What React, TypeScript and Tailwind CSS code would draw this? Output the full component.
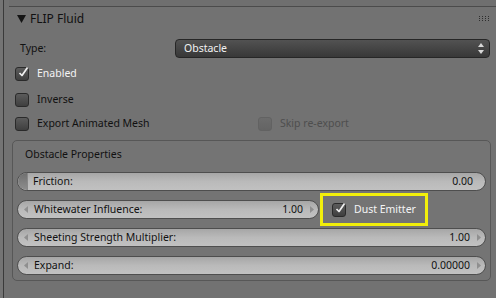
import React from "react";
import clsx from "clsx";

function Check({ on, dim }: { on?: boolean; dim?: boolean }) {
  return (
    <span
      className={clsx(
        "relative block w-[14px] h-[14px] rounded-[3px] border shrink-0",
        dim
          ? "border-[#626262] bg-linear-to-b from-[#6c6c6c] to-[#646464]"
          : "border-[#2a2a2a] bg-linear-to-b from-[#5c5c5c] to-[#3f3f3f]"
      )}
    >
      {on && (
        <svg className="absolute -top-[3px] left-[1px] overflow-visible" width="13" height="14" viewBox="0 0 13 14">
          <path d="M2.5 8 L5 10.5 L10.5 2.5" stroke="#f0f0f0" strokeWidth="1.7" fill="none" strokeLinejoin="round" />
        </svg>
      )}
    </span>
  );
}

function Arrow({ dir }: { dir: "l" | "r" }) {
  return (
    <svg width="4" height="7" viewBox="0 0 4 7" className="shrink-0">
      <path d={dir === "l" ? "M4 0 L0 3.5 L4 7 Z" : "M0 0 L4 3.5 L0 7 Z"} fill="#8f8f8f" />
    </svg>
  );
}

function NumField({
  label,
  value,
  slider,
  className,
}: {
  label: string;
  value: string;
  slider?: boolean;
  className?: string;
}) {
  return (
    <div
      className={clsx(
        "flex items-center h-[19px] rounded-full border border-[#4e4e4e] bg-linear-to-b from-[#a6a6a6] via-[#bababa] to-[#c1c1c1] overflow-hidden text-[#111] leading-[17px]",
        className
      )}
    >
      {slider ? (
        <span className="self-stretch w-[10px] rounded-l-full bg-linear-to-b from-[#6f6f6f] to-[#8e8e8e] border-r border-[#888]" />
      ) : (
        <span className="pl-[6px] flex items-center">
          <Arrow dir="l" />
        </span>
      )}
      <span className={clsx("flex-1 whitespace-nowrap", slider ? "pl-[5px]" : "pl-[6px]")}>{label}</span>
      <span className={slider ? "pr-[12px]" : ""}>{value}</span>
      {!slider && (
        <span className="pl-[7px] pr-[4px] flex items-center">
          <Arrow dir="r" />
        </span>
      )}
    </div>
  );
}

export default function App() {
  return (
    <div className="w-[496px] h-[298px] overflow-hidden flex bg-[#727272] font-['Noto_Sans','DejaVu_Sans',sans-serif] text-[10.5px] leading-normal text-[#111]">
      <div className="w-[3px] bg-[#747474]" />
      <div className="flex-1 border-l border-[#3a3a3a] flex flex-col">
        <div className="h-[7px] ml-[5px] border-b border-[#4b4b4b] bg-[#6f6f6f]" />

        {/* panel header */}
        <div className="h-[23px] flex items-center pl-[13px] pr-[4px]">
          <svg width="9" height="8" viewBox="0 0 9 8" className="mr-[4px]">
            <path d="M0 0 L9 0 L4.5 8 Z" fill="#151515" />
          </svg>
          <span className="text-[12px]">FLIP Fluid</span>
          <svg width="11" height="5" viewBox="0 0 11 5" className="ml-auto mr-[2px]">
            {[0, 3, 6, 9].map((x) =>
              [0, 2, 4].map((y) => <rect key={`${x}-${y}`} x={x} y={y} width="1" height="1" fill="#2e2e2e" />)
            )}
          </svg>
        </div>

        {/* type */}
        <div className="mt-[9px] h-[19px] flex items-center pl-[16px]">
          <span className="w-[155px]">Type:</span>
          <div className="w-[315px] h-[19px] rounded-[4px] border border-[#262626] bg-linear-to-b from-[#525252] to-[#383838] flex items-center pl-[8px] pr-[5px] text-[#f2f2f2]">
            <span className="flex-1">Obstacle</span>
            <svg width="6" height="11" viewBox="0 0 6 11">
              <path d="M3 0 L6 4 L0 4 Z M0 7 L6 7 L3 11 Z" fill="#d8d8d8" />
            </svg>
          </div>
        </div>

        <div className="mt-[9px] h-[14px] flex items-center pl-[11px] gap-[8px]">
          <Check on />
          <span className="text-[#f4f4f4]">Enabled</span>
        </div>
        <div className="mt-[12px] h-[14px] flex items-center pl-[11px] gap-[8px]">
          <Check />
          <span>Inverse</span>
        </div>
        <div className="mt-[10px] h-[14px] flex items-center pl-[11px]">
          <div className="w-[243px] flex items-center gap-[8px]">
            <Check />
            <span>Export Animated Mesh</span>
          </div>
          <div className="flex items-center gap-[8px]">
            <Check dim />
            <span className="text-[#4e4e4e]">Skip re-export</span>
          </div>
        </div>

        {/* obstacle properties box */}
        <div className="mt-[9px] ml-[8px] w-[479px] h-[141px] rounded-[5px] border border-[#575757] bg-[#747474] px-[4px] pt-[4px]">
          <div className="h-[20px] flex items-center pl-[8px]">Obstacle Properties</div>
          <NumField className="mt-[7px]" label="Friction:" value="0.00" slider />
          <div className="mt-[9px] flex items-center">
            <NumField className="w-[302px]" label="Whitewater Influence:" value="1.00" />
            <div className="relative ml-[1px] w-[108px] h-[19px] flex items-center pl-[12px] gap-[8px]">
              <Check on />
              <span className="text-[#f4f4f4]">Dust Emitter</span>
              <div className="absolute left-0 -top-[7px] w-[108px] h-[33px] border-[3px] border-[#f2ef0a]" />
            </div>
          </div>
          <NumField className="mt-[9px]" label="Sheeting Strength Multiplier:" value="1.00" />
          <NumField className="mt-[9px]" label="Expand:" value="0.00000" />
        </div>
      </div>
    </div>
  );
}
